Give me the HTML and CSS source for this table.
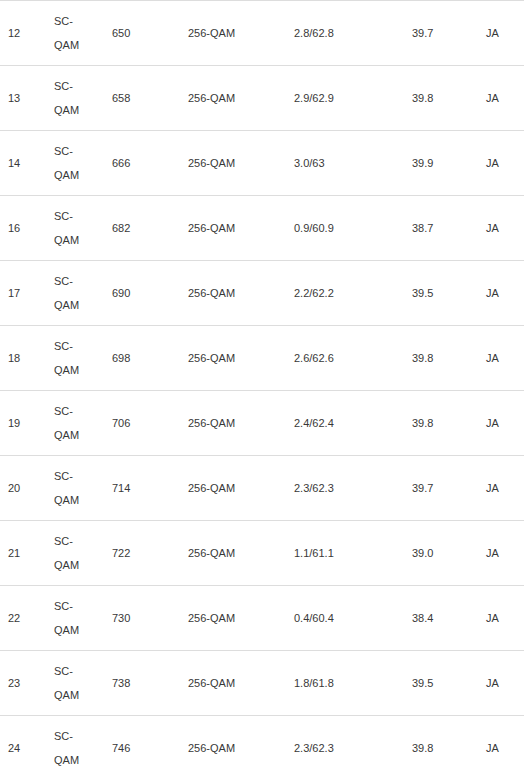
FILE: index.html
```html
<!DOCTYPE html>
<html>
<head>
<meta charset="utf-8">
<link rel="stylesheet" href="styles.css">
</head>
<body>
<table class="channels">
  <colgroup>
    <col class="c-id"><col class="c-type"><col class="c-freq"><col class="c-mod"><col class="c-power"><col class="c-snr"><col class="c-lock">
  </colgroup>
  <tbody>
    <tr><td>12</td><td>SC-QAM</td><td>650</td><td>256-QAM</td><td>2.8/62.8</td><td>39.7</td><td>JA</td></tr>
    <tr><td>13</td><td>SC-QAM</td><td>658</td><td>256-QAM</td><td>2.9/62.9</td><td>39.8</td><td>JA</td></tr>
    <tr><td>14</td><td>SC-QAM</td><td>666</td><td>256-QAM</td><td>3.0/63</td><td>39.9</td><td>JA</td></tr>
    <tr><td>16</td><td>SC-QAM</td><td>682</td><td>256-QAM</td><td>0.9/60.9</td><td>38.7</td><td>JA</td></tr>
    <tr><td>17</td><td>SC-QAM</td><td>690</td><td>256-QAM</td><td>2.2/62.2</td><td>39.5</td><td>JA</td></tr>
    <tr><td>18</td><td>SC-QAM</td><td>698</td><td>256-QAM</td><td>2.6/62.6</td><td>39.8</td><td>JA</td></tr>
    <tr><td>19</td><td>SC-QAM</td><td>706</td><td>256-QAM</td><td>2.4/62.4</td><td>39.8</td><td>JA</td></tr>
    <tr><td>20</td><td>SC-QAM</td><td>714</td><td>256-QAM</td><td>2.3/62.3</td><td>39.7</td><td>JA</td></tr>
    <tr><td>21</td><td>SC-QAM</td><td>722</td><td>256-QAM</td><td>1.1/61.1</td><td>39.0</td><td>JA</td></tr>
    <tr><td>22</td><td>SC-QAM</td><td>730</td><td>256-QAM</td><td>0.4/60.4</td><td>38.4</td><td>JA</td></tr>
    <tr><td>23</td><td>SC-QAM</td><td>738</td><td>256-QAM</td><td>1.8/61.8</td><td>39.5</td><td>JA</td></tr>
    <tr><td>24</td><td>SC-QAM</td><td>746</td><td>256-QAM</td><td>2.3/62.3</td><td>39.8</td><td>JA</td></tr>
  </tbody>
</table>
</body>
</html>
```

FILE: styles.css
```css
html, body {
  margin: 0;
  padding: 0;
  background: #fff;
}

.channels {
  width: 524px;
  border-collapse: collapse;
  table-layout: fixed;
  font-family: "Liberation Sans", Arial, sans-serif;
  font-size: 11px;
  line-height: 24px;
  color: #383838;
}

.c-id { width: 46px; }
.c-type { width: 58px; }
.c-freq { width: 76px; }
.c-mod { width: 106px; }
.c-power { width: 118px; }
.c-snr { width: 74px; }
.c-lock { width: 46px; }

.channels td {
  padding: 8px;
  border-top: 1px solid #ddd;
  vertical-align: middle;
  text-align: left;
}
```
